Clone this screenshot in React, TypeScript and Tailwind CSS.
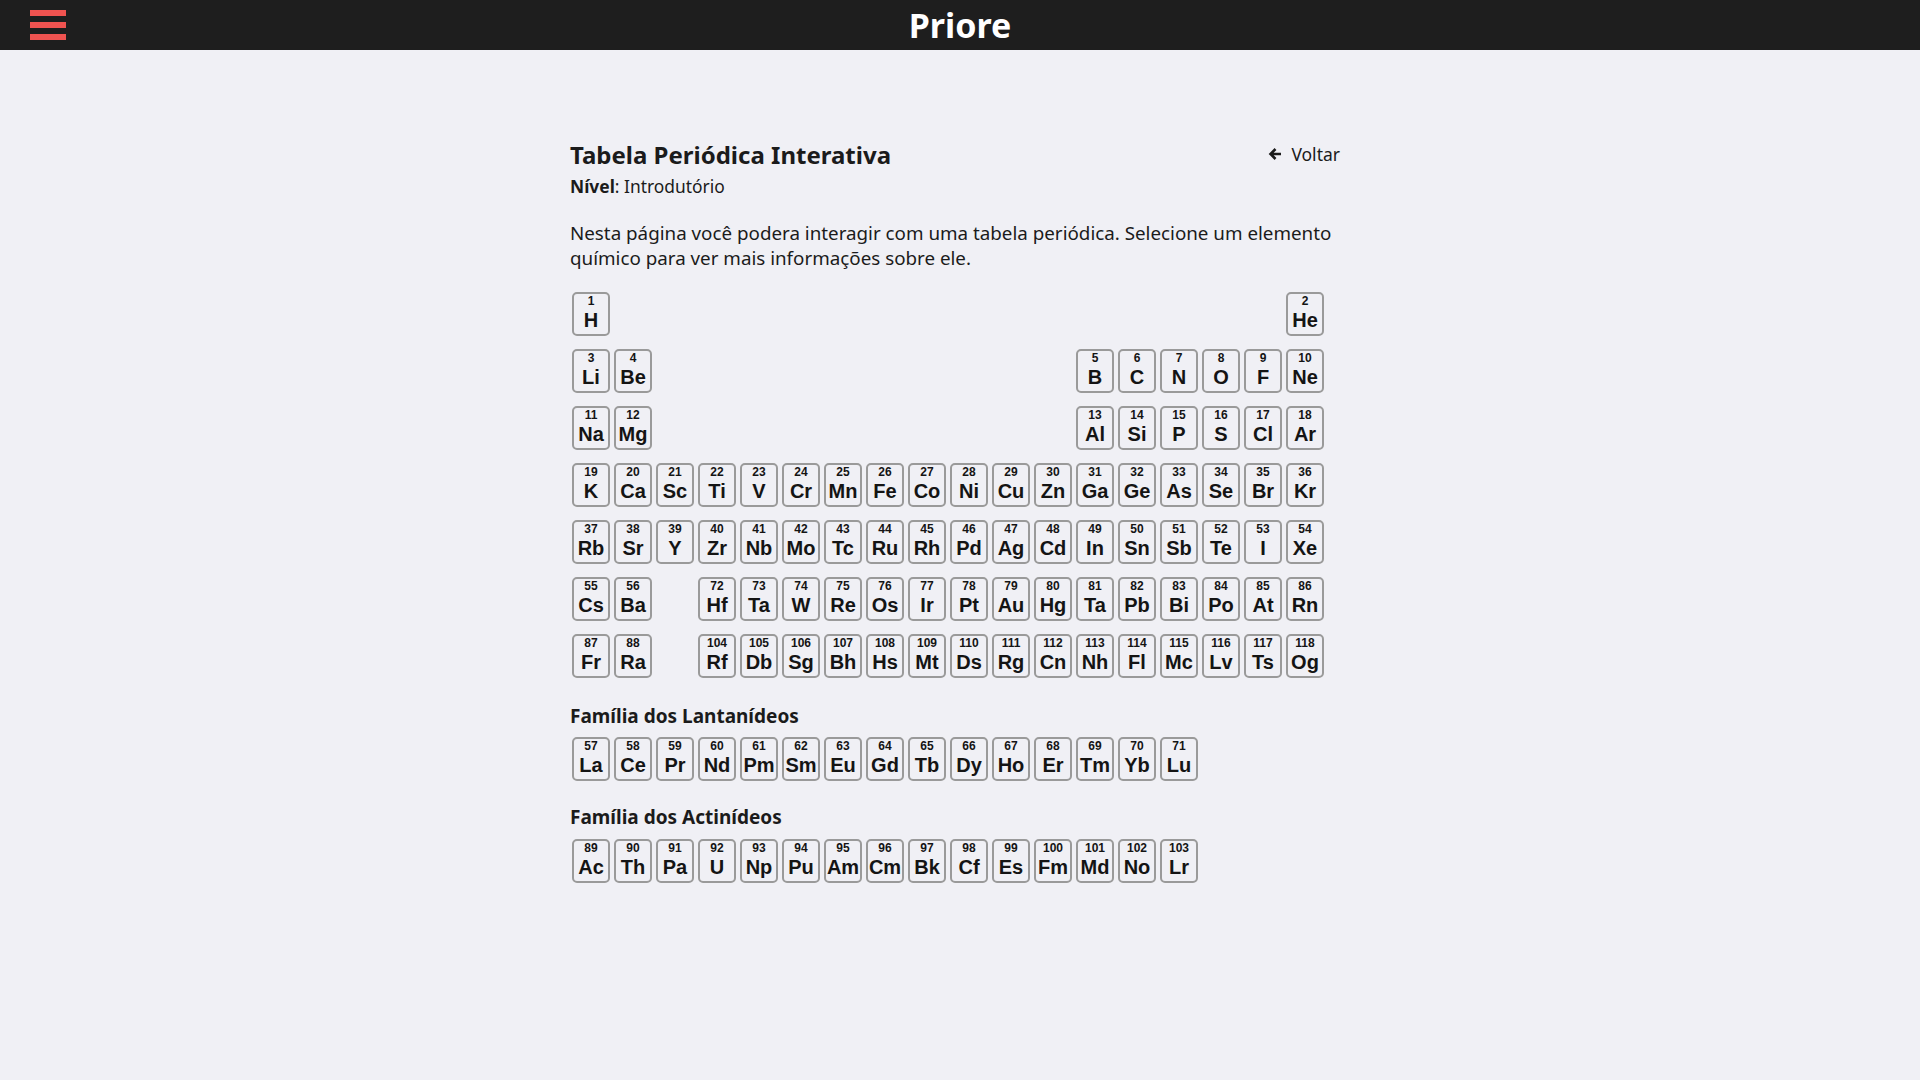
import React from 'react';

type El = [number, string, number]; // number, symbol, column (1-18)

const ui = { fontFamily: '"Noto Sans", "Open Sans", sans-serif' };
const cellFont = { fontFamily: '"Liberation Sans", Arial, sans-serif' };

const rows: El[][] = [
  [[1, 'H', 1], [2, 'He', 18]],
  [[3, 'Li', 1], [4, 'Be', 2], [5, 'B', 13], [6, 'C', 14], [7, 'N', 15], [8, 'O', 16], [9, 'F', 17], [10, 'Ne', 18]],
  [[11, 'Na', 1], [12, 'Mg', 2], [13, 'Al', 13], [14, 'Si', 14], [15, 'P', 15], [16, 'S', 16], [17, 'Cl', 17], [18, 'Ar', 18]],
  ['K', 'Ca', 'Sc', 'Ti', 'V', 'Cr', 'Mn', 'Fe', 'Co', 'Ni', 'Cu', 'Zn', 'Ga', 'Ge', 'As', 'Se', 'Br', 'Kr'].map(
    (s, i) => [19 + i, s, i + 1] as El
  ),
  ['Rb', 'Sr', 'Y', 'Zr', 'Nb', 'Mo', 'Tc', 'Ru', 'Rh', 'Pd', 'Ag', 'Cd', 'In', 'Sn', 'Sb', 'Te', 'I', 'Xe'].map(
    (s, i) => [37 + i, s, i + 1] as El
  ),
  [
    [55, 'Cs', 1],
    [56, 'Ba', 2],
    ...['Hf', 'Ta', 'W', 'Re', 'Os', 'Ir', 'Pt', 'Au', 'Hg', 'Ta', 'Pb', 'Bi', 'Po', 'At', 'Rn'].map(
      (s, i) => [72 + i, s, i + 4] as El
    ),
  ],
  [
    [87, 'Fr', 1],
    [88, 'Ra', 2],
    ...['Rf', 'Db', 'Sg', 'Bh', 'Hs', 'Mt', 'Ds', 'Rg', 'Cn', 'Nh', 'Fl', 'Mc', 'Lv', 'Ts', 'Og'].map(
      (s, i) => [104 + i, s, i + 4] as El
    ),
  ],
];

const lanthanides = ['La', 'Ce', 'Pr', 'Nd', 'Pm', 'Sm', 'Eu', 'Gd', 'Tb', 'Dy', 'Ho', 'Er', 'Tm', 'Yb', 'Lu'];
const actinides = ['Ac', 'Th', 'Pa', 'U', 'Np', 'Pu', 'Am', 'Cm', 'Bk', 'Cf', 'Es', 'Fm', 'Md', 'No', 'Lr'];

function Cell({ n, s, col }: { n: number; s: string; col?: number }) {
  return (
    <button
      style={{ ...cellFont, gridColumnStart: col }}
      className="w-[38px] h-[44px] border-2 border-[#9a9a9a] rounded-[5px] flex flex-col items-center pt-[1px] text-[#141414] bg-transparent"
    >
      <span className="text-[12px] leading-[12px] font-bold">{n}</span>
      <span className="mt-[3px] text-[20px] leading-[20px] font-bold">{s}</span>
    </button>
  );
}

function Family({ title, items, start, gap }: { title: string; items: string[]; start: number; gap: string }) {
  return (
    <div>
      <h3 className="text-[19px] leading-[24px] font-bold text-[#1b1b1b]">{title}</h3>
      <div className={`${gap} ml-[2px] flex gap-x-[4px]`}>
        {items.map((s, i) => (
          <Cell key={s} n={start + i} s={s} />
        ))}
      </div>
    </div>
  );
}

export default function App() {
  return (
    <div style={ui} className="min-h-screen bg-[#f0f0f5]">
      <header className="h-[50px] bg-[#1e1e1e] flex items-center">
        <button className="ml-[30px] flex flex-col gap-[6px]">
          <span className="block w-[36px] h-[6px] bg-[#ef5350]" />
          <span className="block w-[36px] h-[6px] bg-[#ef5350]" />
          <span className="block w-[36px] h-[6px] bg-[#ef5350]" />
        </button>
        <h1 className="flex-1 text-center text-white text-[34px] leading-[40px] font-bold mr-[66px]">Priore</h1>
      </header>

      <main className="w-[780px] mx-auto pt-[90px] pb-[60px]">
        <div className="flex items-start justify-between">
          <div>
            <h2 className="text-[24px] leading-[30px] font-bold text-[#1b1b1b]">Tabela Periódica Interativa</h2>
            <p className="mt-[5px] text-[17.4px] leading-[22px] text-[#1b1b1b]">
              <b>Nível</b>: Introdutório
            </p>
          </div>
          <a className="mt-[1px] mr-[10px] flex items-center gap-[9px] text-[17.5px] text-[#1b1b1b] cursor-pointer">
            <svg width="14" height="14" viewBox="0 0 14 14" fill="none" stroke="#1b1b1b" strokeWidth="2.6">
              <path d="M13 7H2.5M7.5 2L2.5 7l5 5" />
            </svg>
            Voltar
          </a>
        </div>

        <p className="mt-[24px] text-[18.8px] leading-[24.5px] text-[#1b1b1b]">
          Nesta página você podera interagir com uma tabela periódica. Selecione um elemento químico para ver mais
          informações sobre ele.
        </p>

        <div className="mt-[22px] ml-[2px] grid grid-cols-[repeat(18,38px)] gap-x-[4px] gap-y-[13px]">
          {rows.map((r, ri) =>
            r.map(([n, s, col]) => <Cell key={`${ri}-${n}`} n={n} s={s} col={col} />)
          )}
        </div>

        <div className="mt-[26px]">
          <Family title="Família dos Lantanídeos" items={lanthanides} start={57} gap="mt-[9px]" />
        </div>
        <div className="mt-[24px]">
          <Family title="Família dos Actinídeos" items={actinides} start={89} gap="mt-[10px]" />
        </div>
      </main>
    </div>
  );
}
